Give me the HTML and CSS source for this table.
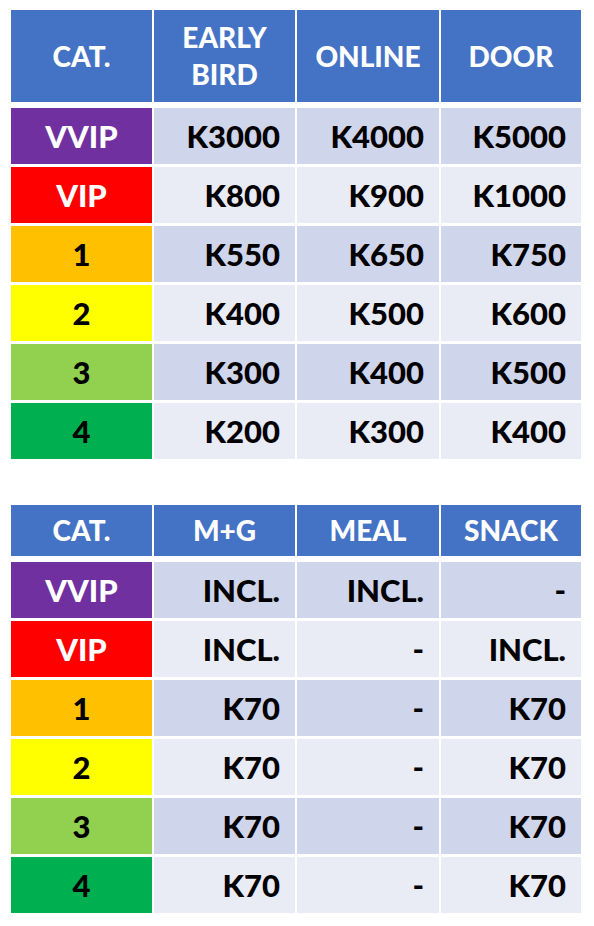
FILE: index.html
```html
<!DOCTYPE html>
<html>
<head>
<meta charset="utf-8">
<link rel="stylesheet" href="styles.css">
</head>
<body>
<div class="page">
  <div class="grid">
    <div class="hd tall">CAT.</div>
    <div class="hd tall">EARLY<br>BIRD</div>
    <div class="hd tall">ONLINE</div>
    <div class="hd tall">DOOR</div>

    <div class="cat vvip">VVIP</div><div class="v dark">K3000</div><div class="v dark">K4000</div><div class="v dark">K5000</div>
    <div class="cat vip">VIP</div><div class="v light">K800</div><div class="v light">K900</div><div class="v light">K1000</div>
    <div class="cat c1">1</div><div class="v dark">K550</div><div class="v dark">K650</div><div class="v dark">K750</div>
    <div class="cat c2">2</div><div class="v light">K400</div><div class="v light">K500</div><div class="v light">K600</div>
    <div class="cat c3">3</div><div class="v dark">K300</div><div class="v dark">K400</div><div class="v dark">K500</div>
    <div class="cat c4">4</div><div class="v light">K200</div><div class="v light">K300</div><div class="v light">K400</div>
  </div>

  <div class="grid second">
    <div class="hd short">CAT.</div>
    <div class="hd short">M+G</div>
    <div class="hd short">MEAL</div>
    <div class="hd short">SNACK</div>

    <div class="cat vvip">VVIP</div><div class="v dark">INCL.</div><div class="v dark">INCL.</div><div class="v dark">-</div>
    <div class="cat vip">VIP</div><div class="v light">INCL.</div><div class="v light">-</div><div class="v light">INCL.</div>
    <div class="cat c1">1</div><div class="v dark">K70</div><div class="v dark">-</div><div class="v dark">K70</div>
    <div class="cat c2">2</div><div class="v light">K70</div><div class="v light">-</div><div class="v light">K70</div>
    <div class="cat c3">3</div><div class="v dark">K70</div><div class="v dark">-</div><div class="v dark">K70</div>
    <div class="cat c4">4</div><div class="v light">K70</div><div class="v light">-</div><div class="v light">K70</div>
  </div>
</div>
</body>
</html>
```
FILE: styles.css
```css
html, body {
  margin: 0;
  padding: 0;
  background: #ffffff;
}
body {
  font-family: Lato, "Open Sans", "Liberation Sans", sans-serif;
  font-weight: 900;
}
.page {
  padding: 10px 13px 0 11px;
}
.grid {
  display: grid;
  grid-template-columns: 141px 141px 142px 140px;
  column-gap: 2px;
  row-gap: 3px;
  width: 570px;
}
.grid.second {
  margin-top: 46px;
}
.hd {
  background: #4472C4;
  color: #ffffff;
  font-size: 28px;
  line-height: 37px;
  display: flex;
  align-items: center;
  justify-content: center;
  text-align: center;
  margin-bottom: 3px;
}
.hd.tall { height: 92px; }
.hd.short { height: 51px; }
.cat, .v {
  height: 56px;
  display: flex;
  align-items: center;
  font-size: 31px;
  color: #000000;
}
.cat {
  justify-content: center;
}
.v {
  justify-content: flex-end;
  padding-right: 15px;
}
.dark { background: #CFD5EA; }
.light { background: #E9EBF5; }
.vvip { background: #7030A0; color: #ffffff; }
.vip { background: #FF0000; color: #ffffff; }
.c1 { background: #FFC000; }
.c2 { background: #FFFF00; }
.c3 { background: #92D050; }
.c4 { background: #00B050; }
```
